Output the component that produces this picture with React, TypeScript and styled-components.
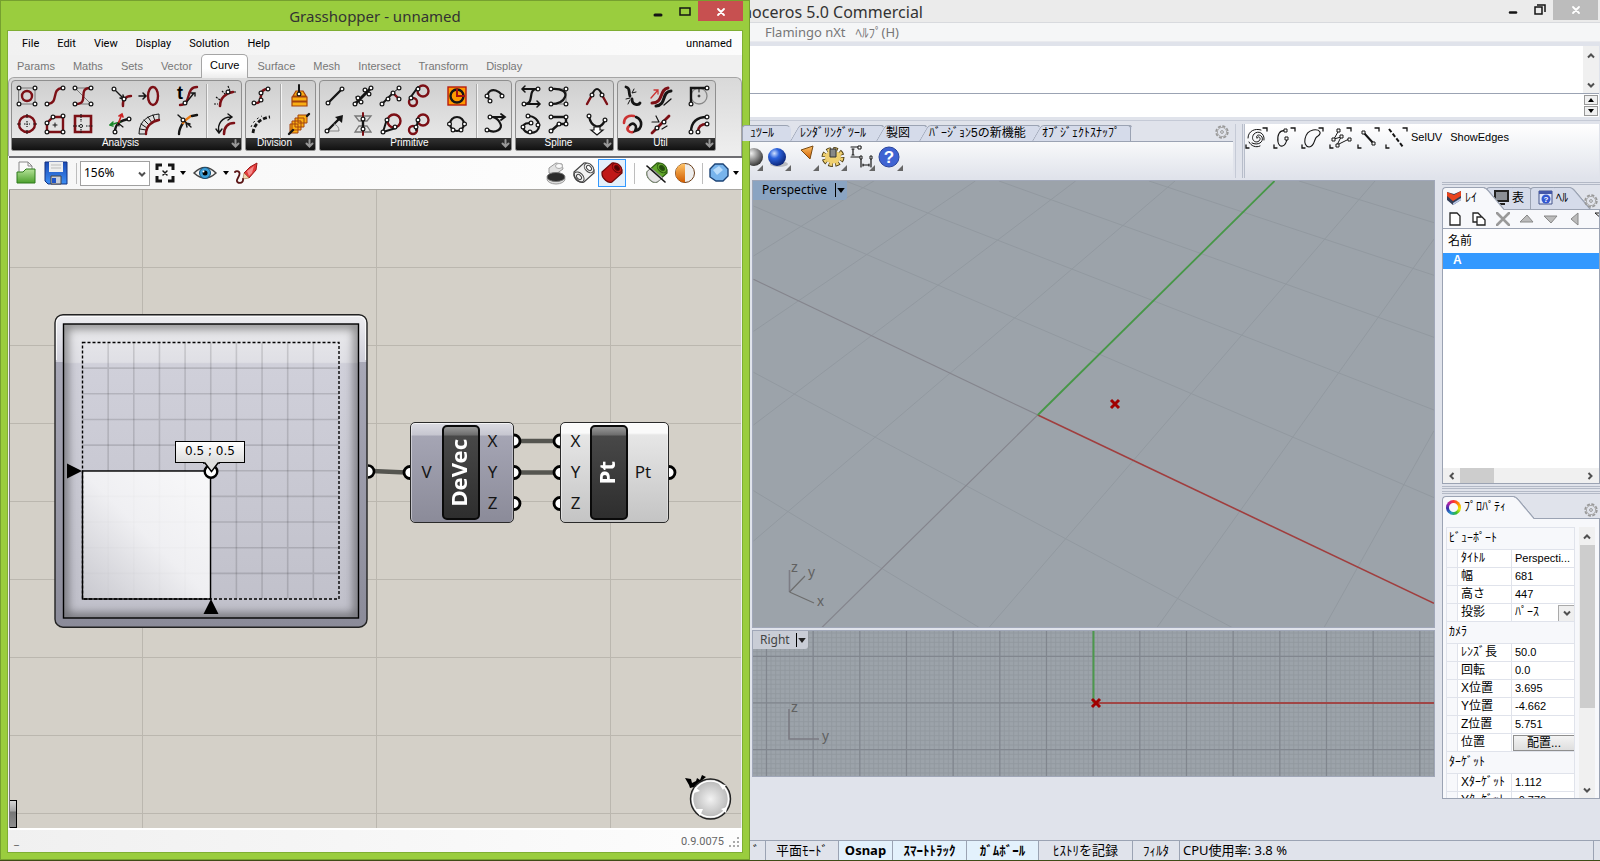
import React from 'react';
import styled, { createGlobalStyle, css } from 'styled-components';

const ui = `"Noto Sans", "Noto Sans CJK JP", sans-serif`;
const menuFont = `Roboto, "Noto Sans CJK JP", sans-serif`;
const gothic = `"Liberation Sans", "Noto Sans CJK JP", sans-serif`;

const K = '#151515';
const R = '#7c1016';

const Global = createGlobalStyle`
  *, *::before, *::after { box-sizing: border-box; }
  html, body { margin: 0; padding: 0; }
  body { background: #e0e3eb; font-family: ${ui}; font-size: 12px; color: #000; }
  button, select, input { font: inherit; color: inherit; border-radius: 0; }
  button { border: 0; padding: 0; background: none; }
  svg { display: block; flex: none; }
`;

const Desktop = styled.div`
  display: grid;
  grid-template-columns: 750px minmax(0, 1fr);
  min-height: 100vh;
  border-bottom: 1px solid #3f4c17;
`;

/* ---------- Grasshopper window ---------- */

const GhWindow = styled.section`
  display: flex;
  flex-direction: column;
  background: #9acd3e;
  border: 1px solid #76a02f;
  padding: 0 6px 6px;
`;

const GhTitleBar = styled.header`
  position: relative;
  display: flex;
  justify-content: center;
  align-items: center;
  height: 29px;
  font-size: 15px;
  line-height: 24px;
  color: #333;
`;

const WindowButtons = styled.div<{ $inset?: boolean }>`
  position: absolute;
  top: 0;
  right: ${(p) => (p.$inset ? 2 : 0)}px;
  display: flex;
`;

const WindowButton = styled.button<{ $close?: string }>`
  display: flex;
  align-items: center;
  justify-content: center;
  width: ${(p) => (p.$close ? 45 : 27)}px;
  height: 20px;
  background: ${(p) => p.$close || 'none'};
`;

const GhClient = styled.div`
  flex: 1;
  display: flex;
  flex-direction: column;
  border: 1px solid #7fae33;
  background: #f0f0f0;
`;

const MenuBar = styled.nav`
  display: flex;
  align-items: center;
  gap: 18px;
  height: 24px;
  padding: 1px 10px 0 14px;
  background: linear-gradient(90deg, #f1f1f1, #fcfcfc);
  font: 11px/16px ${menuFont};
`;

const DocName = styled.span`
  margin-left: auto;
`;

const TabRow = styled.div`
  display: flex;
  align-items: center;
  height: 22px;
  font: 11px/16px ${gothic};
`;

const RibbonTab = styled.button<{ $on?: boolean }>`
  height: 22px;
  padding: 0 9px;
  color: #777;
  ${(p) =>
    p.$on &&
    css`
      position: relative;
      z-index: 1;
      height: 24px;
      padding: 0 8px 4px;
      color: #000;
      background: linear-gradient(#fff 60%, #ececec);
      border: 1px solid #a5a5a5;
      border-bottom: 0;
      border-radius: 5px 5px 0 0;
    `}
`;

const Ribbon = styled.div`
  display: flex;
  gap: 3px;
  height: 79px;
  padding: 2px 2px 0;
  background: linear-gradient(#d9d9d9, #efefef);
  border: 1px solid #a5a5a5;
  border-bottom: 0;
  border-radius: 6px 6px 0 0;
`;

const Group = styled.section`
  display: flex;
  flex-direction: column;
  height: 71px;
  background: linear-gradient(#cfcfcf, #ececec);
  border: 1px solid #8f8f8f;
  border-radius: 4px 4px 2px 2px;
  overflow: hidden;
`;

const GroupBody = styled.div`
  display: flex;
  flex: 1;
  padding: 1px 2px 0 1px;
`;

const GroupSection = styled.div<{ $cols: number }>`
  display: grid;
  grid-template-columns: repeat(${(p) => p.$cols}, 28px);
  grid-template-rows: 28px 28px;
  grid-auto-flow: column;
  & + & {
    margin-left: 10px;
    position: relative;
  }
  & + &::before {
    content: '';
    position: absolute;
    left: -5px;
    top: 2px;
    bottom: 0;
    width: 1px;
    background: #a9a9a9;
    box-shadow: 1px 0 #f4f4f4;
  }
`;

const ToolCell = styled.button`
  display: flex;
  align-items: center;
  justify-content: center;
`;

const GroupFoot = styled.footer`
  position: relative;
  height: 12px;
  padding-right: 12px;
  background: linear-gradient(#333, #111);
  color: #fff;
  text-align: center;
  font: 10px/10px ${gothic};
  svg {
    position: absolute;
    right: 1px;
    top: 1px;
  }
`;

const CanvasBar = styled.div`
  display: flex;
  align-items: center;
  height: 34px;
  margin-left: 1px;
  padding: 0 3px 1px 4px;
  border-top: 2px solid #6e6e72;
  border-bottom: 1px solid #a9a7a2;
  background: linear-gradient(90deg, #f6f6f6, #fff);
`;

const BarButton = styled.button<{ $w?: number; $on?: boolean }>`
  display: flex;
  align-items: center;
  justify-content: center;
  width: ${(p) => p.$w || 28}px;
  height: 28px;
  border: 1px solid ${(p) => (p.$on ? '#3399ff' : 'transparent')};
  background: ${(p) => (p.$on ? '#e4f0fb' : 'none')};
`;

const BarSep = styled.i<{ $gap?: number }>`
  width: 1px;
  height: 21px;
  background: #bdbdbd;
  margin: 0 ${(p) => p.$gap || 4}px;
`;

const Spacer = styled.span`
  flex: 1;
`;

const SelectWrap = styled.div<{ $w?: number }>`
  position: relative;
  width: ${(p) => p.$w || 70}px;
  svg {
    position: absolute;
    right: 4px;
    top: 9px;
    pointer-events: none;
  }
`;

const Zoom = styled.select`
  appearance: none;
  width: 100%;
  height: 25px;
  padding: 0 3px;
  border: 1px solid #a0a0a0;
  background: #fff;
  font: 12px/20px ${ui};
  display: block;
`;

const Canvas = styled.main`
  position: relative;
  flex: 1;
  min-height: 500px;
  margin: 0 1px;
  border-left: 1px solid #77757a;
  overflow: hidden;
  background-color: #d4d0c8;
  background-image: repeating-linear-gradient(90deg, transparent 0 132px, #bbb7af 132px 133px, transparent 133px 234px),
    repeating-linear-gradient(transparent 0 77px, #bbb7af 77px 78px);
`;

const Wires = styled.svg`
  position: absolute;
  left: 0;
  top: 0;
`;

const SliderNode = styled.div`
  position: absolute;
  left: 44px;
  top: 124px;
`;

const Tip = styled.output`
  position: absolute;
  left: 121px;
  top: 127px;
  width: 70px;
  height: 22px;
  border: 1px solid #000;
  background: linear-gradient(#fff, #dcdcdc);
  font: 12px/18px "DejaVu Sans", sans-serif;
  text-align: center;
`;

const TipTail = styled.svg`
  position: absolute;
  left: 149px;
  top: 148px;
`;

const Node = styled.div<{ $x: number; $w: number; $light?: boolean }>`
  position: absolute;
  left: ${(p) => p.$x}px;
  top: 232px;
  display: flex;
  width: ${(p) => p.$w}px;
  height: 101px;
  padding: 2px 0;
  border: 1px solid #2a2a2a;
  border-radius: 5px;
  box-shadow: inset 0 1px #ffffffb0, inset 1px 0 #ffffff70, inset -1px 0 #ffffff50;
  background: ${(p) =>
    p.$light
      ? 'linear-gradient(#fafafa 0 10px, #e6e6e6 12px, #c4c4c4)'
      : 'linear-gradient(#dcdce3 0, #c6c6d0 12px, #a5a5b4 13px, #8b8b99)'};
`;

const Ports = styled.div<{ $w: number }>`
  display: flex;
  flex-direction: column;
  justify-content: space-around;
  align-items: center;
  width: ${(p) => p.$w}px;
  padding: 0 0 2px;
  font: 17px/30px ${ui};
  color: #151515;
`;

const Capsule = styled.div`
  display: flex;
  align-items: center;
  justify-content: center;
  width: 38px;
  padding-right: 6px;
  border: 2px solid #0a0a0a;
  border-radius: 5px;
  background: linear-gradient(#989898, #6d6d6d 8px, #484848 9px, #2e2e2e);
  color: #fff;
  font: bold 22px/26px ${ui};
  span {
    writing-mode: vertical-rl;
    transform: rotate(180deg);
  }
`;

const Compass = styled.svg`
  position: absolute;
  right: 9px;
  bottom: 7px;
`;

const DockedSlider = styled.div`
  position: absolute;
  left: -1px;
  bottom: 0;
  width: 8px;
  height: 28px;
  border: 1px solid #000;
  border-left: 0;
  background: linear-gradient(#d5d5d5, #a5a5a5 10px, #777 11px, #8d8d8d);
`;

const GhStatus = styled.footer`
  display: flex;
  justify-content: space-between;
  align-items: center;
  height: 24px;
  padding: 2px 2px 0 6px;
  border-top: 2px solid #fff;
  background: linear-gradient(90deg, #f0f0f0, #fdfdfd);
  font: 11px/16px ${menuFont};
  color: #666;
  div {
    display: flex;
    align-items: center;
    gap: 4px;
  }
`;

/* ---------- Rhino window ---------- */

const Rhino = styled.section`
  display: flex;
  flex-direction: column;
  min-width: 0;
  background: #e0e3eb;
`;

const RhTitle = styled.header`
  position: relative;
  display: flex;
  height: 23px;
  background: #ebebeb;
  border-bottom: 1px solid #d8dade;
  font: 16px/24px ${ui};
  color: #333;
`;

const RhinoTitleText = styled.span`
  width: 173px;
  display: flex;
  justify-content: flex-end;
  overflow: hidden;
  white-space: nowrap;
`;

const RhMenu = styled.nav`
  display: flex;
  gap: 10px;
  height: 19px;
  padding-left: 15px;
  background: #f5f6f7;
  border-bottom: 1px solid #e9eaee;
  font-size: 13px;
  line-height: 18px;
  color: #777;
`;

const Commands = styled.div`
  margin: 4px 1px 0 0;
  background: #fff;
`;

const History = styled.div`
  display: flex;
  justify-content: flex-end;
  height: 48px;
  border-bottom: 1px solid #9ba3b3;
`;

const ScrollCol = styled.div`
  display: flex;
  flex-direction: column;
  align-items: center;
  justify-content: space-between;
  width: 16px;
  padding: 6px 0 4px;
  background: #f0f0f0;
`;

const CommandLine = styled.div`
  display: flex;
  height: 23px;
  padding-right: 1px;
`;

const CommandInput = styled.input`
  flex: 1;
  min-width: 0;
  border: 0;
  outline: 0;
  padding: 0 6px;
  background: transparent;
`;

const Spin = styled.div`
  display: grid;
  gap: 1px;
  padding: 1px 0;
  button {
    display: grid;
    place-items: center;
    width: 14px;
    height: 10px;
    border: 1px solid #999;
    background: #f0f0f0;
  }
`;

const ToolRows = styled.div`
  display: flex;
  height: 59px;
  margin-top: 3px;
  border-top: 1px solid #c5cad6;
  padding-top: 3px;
`;

const ToolDock = styled.div`
  flex: 1;
  min-width: 0;
  display: flex;
  flex-direction: column;
  margin-bottom: 1px;
  border-right: 1px solid #c5cad6;
  padding-right: 2px;
`;

const DockTabs = styled.div`
  display: flex;
  align-items: flex-end;
  height: 18px;
  border-bottom: 1px solid #9ba3b3;
  font: 12px/15px ${gothic};
`;

const DockTab = styled.button<{ $w: number; $first?: boolean; $last?: boolean }>`
  position: relative;
  z-index: 0;
  width: ${(p) => p.$w}px;
  height: 16px;
  padding: 1px 0 0 ${(p) => (p.$first ? 0 : 14)}px;
  text-align: left;
  white-space: nowrap;
  &::before {
    content: '';
    position: absolute;
    z-index: -1;
    inset: 0 ${(p) => (p.$last ? 6 : -5)}px 0 ${(p) => (p.$first ? -8 : 4)}px;
    background: #d5dbea;
    border: 1px solid #9ba3b3;
    border-bottom: 0;
    border-right-color: transparent;
    border-radius: 3px 5px 0 0;
    transform: ${(p) => (p.$first ? 'none' : 'skewX(-30deg)')};
    transform-origin: bottom;
  }
  ${(p) =>
    p.$last &&
    css`
      &::after {
        content: '';
        position: absolute;
        z-index: -1;
        inset: 0 0 0 auto;
        width: 20px;
        background: #d5dbea;
        border: solid #9ba3b3;
        border-width: 1px 1px 0 0;
        border-radius: 0 3px 0 0;
      }
    `}
`;

const GearSlot = styled.button`
  margin: 0 4px 2px auto;
`;

const DockTools = styled.div`
  display: flex;
  flex: 1;
  background: linear-gradient(#f8f9fa, #e0e3eb);
  padding-top: 1px;
`;

const DockTool = styled.button<{ $w?: number }>`
  position: relative;
  display: flex;
  align-items: center;
  justify-content: center;
  width: ${(p) => p.$w || 28}px;
  height: 28px;
  overflow: hidden;
  &::after {
    content: '';
    position: absolute;
    right: 0;
    bottom: 0;
    border: 3px solid;
    border-color: transparent #666 #666 transparent;
  }
`;

const SideTools = styled.div`
  display: flex;
  align-items: flex-start;
  width: 357px;
  margin: 0 1px 1px 6px;
  border-left: 1px solid #b7bdca;
  box-shadow: inset 1px 0 #e0e3eb, inset 2px 0 #b7bdca;
  background: linear-gradient(#fff, #e0e3eb);
  font: 11px/16px ${gothic};
`;

const SideTool = styled.button`
  width: 28px;
  height: 28px;
  display: grid;
  place-items: center;
`;

const TextTool = styled.button`
  margin-right: 8px;
  padding-top: 5px;
`;

const Work = styled.div`
  flex: 1;
  display: flex;
  padding: 1px 0 41px;
`;

const Views = styled.div`
  flex: 1;
  min-width: 0;
  display: flex;
  flex-direction: column;
  gap: 2px;
  padding: 0 7px 22px 2px;
`;

const View = styled.div<{ $grow: number }>`
  position: relative;
  flex: ${(p) => p.$grow} 0 0;
  min-height: ${(p) => p.$grow / 2}px;
  border: 1px solid #a0a7b8;
  background: #9ca3aa;
  overflow: hidden;
  > svg {
    position: absolute;
    inset: 0;
    width: 100%;
    height: 100%;
  }
`;

const ViewLabel = styled.button<{ $on?: boolean }>`
  position: absolute;
  left: 0;
  top: 0;
  display: flex;
  align-items: center;
  gap: ${(p) => (p.$on ? 8 : 6)}px;
  height: ${(p) => (p.$on ? 19 : 18)}px;
  padding: 0 2px ${(p) => (p.$on ? 2 : 0)}px ${(p) => (p.$on ? 9 : 7)}px;
  border-radius: 0 0 3px 0;
  background: ${(p) => (p.$on ? '#8aa4c2' : '#c9cdd6')};
  color: ${(p) => (p.$on ? '#000' : '#444')};
  font-size: 12px;
  line-height: 17px;
  span {
    display: block;
    height: 14px;
    padding: 5px 0 0 1px;
    border-left: 1px solid #000;
  }
`;

const Side = styled.aside`
  width: 158px;
  display: flex;
  flex-direction: column;
`;

const DoubleRule = styled.i`
  flex: none;
  height: 3px;
  margin-top: 2px;
  border: solid #b3b9c6;
  border-width: 1px 0;
`;

const Panel = styled.div<{ $h: number }>`
  flex: ${(p) => p.$h} 0 0;
  min-height: 0;
  display: flex;
  flex-direction: column;
  border: 1px solid #9ba3b3;
  border-top: 0;
  background: #fff;
  overflow: hidden;
`;

const PanelTabs = styled.div`
  position: relative;
  display: flex;
  flex: none;
  height: 23px;
  margin-top: 2px;
  border-bottom: 1px solid #9ba3b3;
  font: 12px/18px ${gothic};
`;

const PanelTab = styled.button<{ $w: number; $on?: boolean }>`
  position: relative;
  z-index: ${(p) => (p.$on ? 1 : 0)};
  display: flex;
  align-items: center;
  gap: 3px;
  width: ${(p) => p.$w}px;
  height: ${(p) => (p.$on ? 'calc(100% + 1px)' : '100%')};
  padding: 0 0 1px ${(p) => (p.$on ? 4 : 8)}px;
  white-space: nowrap;
  &::before {
    content: '';
    position: absolute;
    z-index: -1;
    inset: 0 0 0 0;
    border: 1px solid #9ba3b3;
    border-bottom: 0;
    border-right: 0;
    border-radius: 4px 3px 0 0;
    background: ${(p) => (p.$on ? '#f7f8fb' : '#d5dbea')};
  }
  &::after {
    content: '';
    position: absolute;
    z-index: -1;
    top: 0;
    bottom: 0;
    right: -10px;
    width: 20px;
    border-top: 1px solid #9ba3b3;
    border-right: 2px solid #9ba3b3;
    border-top-right-radius: 4px;
    background: ${(p) => (p.$on ? '#f7f8fb' : '#d5dbea')};
    transform: skewX(40deg);
  }
`;

const PanelGear = styled.button`
  position: absolute;
  right: 2px;
  bottom: 1px;
`;

const LayerTools = styled.div`
  display: flex;
  flex: none;
  align-items: center;
  height: 19px;
  border-bottom: 1px solid #9ba3b3;
  background: #f7f8fb;
  overflow: hidden;
  button {
    flex: none;
    display: grid;
    place-items: center;
    width: 24px;
  }
`;

const LayerTable = styled.table`
  border-collapse: collapse;
  width: 100%;
  font: 12px/15px ${gothic};
  th {
    height: 24px;
    padding: 0 5px;
    text-align: left;
    font-weight: normal;
    background: #fcfcfd;
  }
  td {
    height: 16px;
    padding: 0 10px;
    background: #3399ff;
    border-bottom: 1px dotted #fff;
    color: #fff;
    font-weight: bold;
  }
`;

const HScroll = styled.div`
  display: flex;
  align-items: center;
  flex: none;
  height: 15px;
  margin-top: auto;
  padding: 0 5px;
  background: #f0f0f0;
  i {
    width: 34px;
    height: 15px;
    margin: 0 auto 0 4px;
    background: #cdcdcd;
  }
`;

const Props = styled.div`
  display: flex;
  height: 100%;
  min-height: 0;
  padding: 8px 4px 0 3px;
  background: #f7f8fb;
`;

const PropTable = styled.table`
  align-self: flex-start;
  width: 129px;
  border-collapse: collapse;
  table-layout: fixed;
  font: 12px/15px ${gothic};
  th,
  td {
    height: 18px;
    padding: 0 0 0 3px;
    border: 1px solid #e0e3eb;
    text-align: left;
    font-weight: normal;
    white-space: nowrap;
    overflow: hidden;
    background: #fff;
  }
  th[scope='colgroup'] {
    height: 22px;
    padding-left: 2px;
    background: #f7f8fb;
  }
  td:first-child {
    background: #f7f8fb;
  }
  td:last-child {
    font-size: 11px;
  }
  col:nth-child(1) { width: 11px; }
  col:nth-child(2) { width: 54px; }
`;

const Projection = styled.select`
  appearance: none;
  display: block;
  width: 100%;
  height: 16px;
  padding: 0;
  border: 0;
  background: transparent;
  font-size: 12px;
`;

const DropBox = styled.span`
  position: absolute;
  right: 0;
  top: 0;
  display: grid;
  place-items: center;
  width: 17px;
  height: 17px;
  border: 1px solid #aaa;
  background: #efefef;
  pointer-events: none;
  svg { position: static; }
`;

const PlaceButton = styled.button`
  display: block;
  width: 62px;
  height: 16px;
  margin-left: -2px;
  border: 1px solid #8f8f8f;
  background: linear-gradient(#f4f4f4, #dedede);
  font-size: 12px;
`;

const Thumb = styled.i`
  width: 15px;
  height: 163px;
  margin: 4px 0 auto;
  background: #cdcdcd;
`;

const RhStatus = styled.footer`
  display: flex;
  height: 20px;
  border-top: 1px solid #9ba3b3;
  font: 13px/18px ${ui};
`;

const StatusCell = styled.button<{ $w?: number; $on?: boolean; $left?: boolean }>`
  flex: ${(p) => (p.$w ? 'none' : '1')};
  width: ${(p) => (p.$w ? p.$w + 'px' : 'auto')};
  padding: 0 3px 1px;
  border-right: 1px solid #9ba3b3;
  text-align: ${(p) => (p.$left ? 'left' : 'center')};
  white-space: nowrap;
  overflow: hidden;
  background: ${(p) => (p.$on ? '#e3f1fc' : 'none')};
  font-weight: ${(p) => (p.$on ? 'bold' : 'normal')};
`;

const StatusEnd = styled.i`
  width: 6px;
`;

const ColorRing = styled.i`
  flex: none;
  width: 15px;
  height: 15px;
  border-radius: 50%;
  background: radial-gradient(#f7f8fb 4px, transparent 5px), conic-gradient(#f33, #f80, #ee0, #3b3, #29c, #33a, #a2a, #f33);
`;

/* ---------- Icons ---------- */

const N = ({ x, y }: { x: number; y: number }) => (
  <circle cx={x} cy={y} r="1.9" fill="#fff" stroke={K} strokeWidth="1.2" />
);
const P = ({ d, c = K, w = 2, dash }: { d: string; c?: string; w?: number; dash?: string }) => (
  <path d={d} fill="none" stroke={c} strokeWidth={w} strokeDasharray={dash} strokeLinecap={dash ? 'butt' : 'round'} />
);
const Ico = ({ children, s = 24 }: { children: React.ReactNode; s?: number }) => (
  <svg width={s} height={s} viewBox={`0 0 ${s} ${s}`} aria-hidden="true">
    {children}
  </svg>
);

const nodes = (...pts: number[][]) => pts.map(([x, y], i) => <N key={i} x={x} y={y} />);

type Tool = [string, React.ReactNode];

const analysis: Tool[][] = [
  [
    ['Bounds', <><P w={1} c="#777" d="M4 4H20V20H4Z" /><circle cx="12" cy="12" r="5" fill="none" stroke={R} strokeWidth="2.4" />{nodes([4, 4], [20, 4], [4, 20], [20, 20])}</>],
    ['Centre', <><circle cx="12" cy="12" r="8" fill="none" stroke={R} strokeWidth="2.4" /><P w={1.2} dash="1.5 1" d="M2 12H6M18 12H22M12 2V6M12 18V22M9 12H15M12 9V15" /></>],
    ['End points', <><P c={R} d="M5 20C16 19 8 5 19 4" w={2.4} />{nodes([4, 20], [20, 4])}</>],
    ['Polygon', <><P c={R} w={2.4} d="M4 20V11L10 5H20V20Z" /><P w={1} d="M10 13H14M12 11V15" />{nodes([4, 11], [10, 5], [20, 4], [4, 20], [20, 20])}</>],
    ['Control polygon', <><P w={1} c="#777" d="M4 4H20M4 4L20 20M4 20H20" /><P c={R} d="M5 20C19 20 6 4 19 4" w={2.4} />{nodes([4, 4], [20, 4], [4, 20], [20, 20])}</>],
    ['Rectangle', <><P c={R} w={2.6} d="M4 4H20V20H4Z" /><P w={1.2} dash="1.5 1" d="M2 14H9M15 14H22M10 2V10M10 17V22" /><circle cx="10" cy="14" r="1.5" fill="#fff" stroke={K} /></>],
  ],
  [
    ['Closest point', <><P w={1.4} d="M5 5L15 15M11 14L15 15L14 11" /><P c={R} w={2.4} d="M14 22C13 16 17 12 22 12" />{nodes([5, 5], [15, 15])}</>],
    ['Frame', <><P w={2.4} d="M6 20C6 11 12 8 21 7" /><P w={1.6} c="#1a8a2a" d="M11 10L1 13M4 10L1 13L4 14" /><P w={1.6} c="#c22" d="M9 12L13 2M10 4L13 2L14 5" /><P w={1.2} d="M9 11L14 15M10 14L9 11" />{nodes([6, 20], [20, 7])}</>],
    ['Closed', <><P w={1.5} d="M2 12H8M6 9L9 12L6 15" /><ellipse cx="16" cy="12" rx="5" ry="9" fill="none" stroke={R} strokeWidth="2.4" /></>],
    ['Curvature graph', <><path d="M2 22C2 8 12 3 22 2V8C15 9 9 14 9 22Z" fill="#ddd" stroke={K} /><P w={1} d="M3 17L9 18M4 12L10 16M7 8L12 13M11 5L15 11M16 3L18 9" /><P c={R} w={2.4} d="M9 22C9 14 15 9 22 8" /></>],
  ],
  [
    ['Parameter', <><P c={R} w={2.4} d="M5 21C17 21 10 3 22 3" /><P w={1.4} d="M10 20L19 9M16 9H20V12" /><text x="2" y="15" fontSize="18" fontWeight="bold" fontFamily="Liberation Sans">t</text>{nodes([10, 19])}</>],
    ['Curvature', <><P w={2.4} d="M4 22C4 17 6 14 8 11" /><P c="#e87a14" w={2.4} d="M8 11C11 7 13 6 16 4" /><P w={2.4} d="M17 4L22 3" /><P w={1.4} d="M3 3L16 15M12 15L11 11L15 12" />{nodes([8, 8])}</>],
  ],
  [
    ['Divide', <><P c={R} w={2.6} d="M7 22C7 14 13 9 20 8" /><P w={1.2} dash="2 1" d="M1 20H5M3 13L7 16M9 7L12 10M15 2L17 7M21 8L23 8" />{nodes([15, 8])}</>],
    ['Length', <><P c={R} w={2.6} d="M11 22C11 15 15 11 21 11" /><P w={1.4} d="M6 20C4 12 9 5 18 5M3 17L6 21L9 17M15 2L19 5L15 8" /></>],
  ],
];

const division: Tool[][] = [
  [
    ['Divide curve', <><P c={R} w={2.4} d="M5 19C12 20 11 15 12 12C12 7 14 5 19 5" />{nodes([5, 19], [12, 16], [12, 9], [19, 5])}</>],
    ['Dash pattern', <><P w={2.8} dash="4 2" d="M4 21C5 12 12 6 21 5" /><P w={1} dash="2 3" d="M2 15C4 10 8 6 13 4" /></>],
  ],
  [
    ['Contour', <><path d="M5 22H20V18H5ZM5 17H20V13H5ZM6 12H19L16 7H9Z" fill="#f9ae14" stroke="#a3420c" strokeWidth="1.2" /><P d="M12 1V9" />{nodes([12, 10])}</>],
    ['Perp frames', <><path d="M11 3H20V11H11ZM8 6H17V15H8ZM5 9H14V18H5ZM3 12H11V21H3Z" fill="#f9ae14" stroke="#a3420c" /><P w={2.4} d="M2 22L6 18M20 4L22 2" /></>],
  ],
];

const primitive: Tool[][] = [
  [
    ['Line', <><P d="M5 19L19 5" w={2.4} />{nodes([5, 19], [19, 5])}</>],
    ['Line SDL', <><P d="M4 19L17 6" w={2.4} /><path d="M20 3L19 11L12 5Z" fill={K} /><P w={1} c="#888" d="M5 19H16C16 15 14 13 11 12" />{nodes([4, 19])}</>],
    ['Line 4pt', <><P d="M4 20L20 4" w={3} /><P w={1.2} d="M5 13L11 19M13 5L19 11" />{nodes([4, 20], [7, 14], [10, 18], [14, 6], [18, 10], [20, 4])}</>],
    ['Line 2 planes', <><P d="M4 4H20L16 9H8ZM4 20H20L16 14H8Z" w={1.3} c="#777" /><P c={R} d="M12 1V5M12 19V23" /><P w={2.4} d="M12 7V17" />{nodes([12, 7], [12, 17])}</>],
    ['Fit line', <><P d="M3 20L14 9" w={2} /><P d="M14 9L19 14" c={R} w={2.4} /><P w={1} d="M14 9L20 4" />{nodes([3, 20], [9, 15], [14, 9], [20, 4], [20, 15])}</>],
    ['Tangent line', <><circle cx="15" cy="9" r="6.5" fill="none" stroke={R} strokeWidth="2.4" /><P w={2} d="M4 20L8 7M4 20L17 16" />{nodes([4, 20], [8, 8], [16, 15])}</>],
    ['Tangent out', <><circle cx="16" cy="7" r="5.5" fill="none" stroke={R} strokeWidth="2.4" /><circle cx="6" cy="18" r="4" fill="none" stroke={R} strokeWidth="2.4" /><P d="M3 14L11 3" />{nodes([4, 14], [11, 5])}</>],
    ['Tangent in', <><circle cx="16" cy="8" r="5.5" fill="none" stroke={R} strokeWidth="2.4" /><circle cx="6" cy="18" r="4" fill="none" stroke={R} strokeWidth="2.4" /><P d="M9 18L11 8" />{nodes([9, 15], [11, 8])}</>],
  ],
  [
    ['Circle', <><rect x="3" y="3" width="18" height="18" fill="#f90" stroke="#b81c0c" strokeWidth="1.4" /><circle cx="12" cy="12" r="6.5" fill="none" stroke={K} strokeWidth="2.4" /><P c="#a61010" d="M12 5V12H19" /></>],
    ['Circle 3pt', <><circle cx="12" cy="12" r="7" fill="none" stroke={K} strokeWidth="2.2" />{nodes([4.5, 12], [19.5, 12], [8, 18], [16, 18])}</>],
  ],
  [
    ['Arc', <><P w={2.2} d="M7 17C0 8 11 1 19 11" />{nodes([7, 17], [19, 12], [4, 12])}</>],
    ['Arc SED', <><P w={2.2} d="M5 18C12 22 21 17 17 11C16 8 12 5 9 5" /><P w={1.8} d="M6 5H21M18 2L22 5L18 8" />{nodes([4, 18], [7, 5])}</>],
  ],
];

const spline: Tool[][] = [
  [
    ['Bezier', <><P w={2.2} d="M5 20H20M19 5H4M18 5C8 5 16 20 6 20" /><P w={1.5} d="M6 2L3 5L6 8M18 17L21 20L18 23" />{nodes([19, 5], [5, 20])}</>],
    ['Interpolate', <><P w={2.2} d="M4 15C4 23 20 23 20 14C20 8 15 4 9 4M4 15C5 11 8 11 12 11" />{nodes([9, 4], [4, 15], [12, 11], [19, 13], [11, 20])}</>],
    ['Nurbs', <><P w={1} c="#777" d="M4 5H19V20H4" /><P w={2.2} d="M4 5C15 4 20 8 18 13C16 18 10 20 4 20" />{nodes([4, 5], [19, 5], [19, 20], [4, 20])}</>],
    ['Polyline', <><P w={2.4} d="M4 5H19V12H12L4 19" />{nodes([4, 5], [19, 5], [19, 12], [12, 12], [4, 19])}</>],
  ],
  [
    ['Tangent curve', <><P c={R} w={2.4} d="M2 20L7 11M17 11L22 20" /><P w={2.2} d="M7 11C10 3 14 3 17 11" />{nodes([7, 11], [17, 11])}</>],
    ['Catenary', <><P w={2.2} d="M4 4C6 16 16 18 20 8" /><path d="M9 15H15V18H18L12 23L6 18H9Z" fill="#fff" stroke={K} strokeWidth="1.2" />{nodes([4, 4], [20, 8])}</>],
  ],
];

const util: Tool[][] = [
  [
    ['Explode', <><P w={2.8} d="M5 3C10 4 7 8 9 12M11 15C11 22 18 21 19 19" /><P w={1} d="M13 5L11 9L15 8M5 15L9 14M7 20L9 16" /></>],
    ['Extend', <><P c="#c33" w={2.6} d="M3 11C3 5 8 3 13 4M12 20C9 21 4 18 8 14" /><P w={2.6} d="M9 13C12 10 17 13 14 19C22 17 22 8 15 5" /></>],
    ['Offset', <><P c={R} w={3} d="M3 19C15 19 10 5 19 4" /><P c={K} w={3} d="M7 22C18 21 12 8 22 7" /><P c="#c33" w={1.3} d="M2 14L9 6M5 6H9V10" /><P w={1.3} d="M22 15L15 21" /></>],
    ['Split', <><P c={R} w={2.8} d="M3 21L20 4" /><P w={1.2} d="M3 10L9 10M7 4L10 10M13 17L18 14" />{nodes([8, 16], [15, 10])}</>],
  ],
  [
    ['Fillet', <><circle cx="12" cy="12" r="8" fill="none" stroke="#888" strokeWidth="1.3" /><P w={2.4} d="M4 20V4H20" /><P w={1} d="M12 11V13M11 12H13M12 8V4" />{nodes([4, 20], [20, 4])}</>],
    ['Offset loose', <><P w={2.4} d="M4 20C4 10 10 5 20 5" /><P c={R} w={2.4} d="M11 20C11 15 14 12 20 12" />{nodes([4, 20], [20, 5], [11, 20], [20, 12])}</>],
  ],
];

const groups: [string, Tool[][]][] = [
  ['Analysis', analysis],
  ['Division', division],
  ['Primitive', primitive],
  ['Spline', spline],
  ['Util', util],
];

const Arrow = ({ w = 6, c = '#000', up = false }: { w?: number; c?: string; up?: boolean }) => (
  <svg width={w} height={w / 2 + 1} viewBox="0 0 6 4" aria-hidden="true">
    <path d={up ? 'M0 4H6L3 0Z' : 'M0 0H6L3 4Z'} fill={c} />
  </svg>
);

const Chevron = ({ turn = 0 }: { turn?: number }) => (
  <svg width="8" height="8" viewBox="0 0 8 8" aria-hidden="true">
    <path d="M1 2.5L4 5.5L7 2.5" fill="none" stroke="#505050" strokeWidth="2" transform={`rotate(${turn} 4 4)`} />
  </svg>
);

const Gear = () => (
  <Ico s={14}>
    <circle cx="7" cy="7" r="5.8" fill="none" stroke="#999" strokeWidth="1.8" strokeDasharray="3 1.5" />
    <circle cx="7" cy="7" r="4.6" fill="none" stroke="#aaa" />
    <circle cx="7" cy="7" r="1.4" fill="none" stroke="#999" />
  </Ico>
);

const Cyl = ({ fill, line, dark, half, wire }: { fill: string; line: string; dark: string; half?: boolean; wire?: boolean }) => (
  <Ico>
    <path d="M2 11L12 2C15 1 21 5 22 9V12L12 21C8 23 2 17 2 13Z" fill={fill} stroke={line} strokeWidth="1.2" />
    {half && <path d="M2 11L6 7L18 17L12 21C8 23 2 17 2 13Z" fill="#e4e4e4" stroke="#888" />}
    <ellipse cx="17" cy="7" rx="5.5" ry="3.8" transform="rotate(45 17 7)" fill={fill} stroke={line} />
    <ellipse cx="17" cy="7" rx="3" ry="2" transform="rotate(45 17 7)" fill={dark} stroke={line} />
    {wire && (
      <>
        <ellipse cx="7" cy="16" rx="6" ry="4" transform="rotate(45 7 16)" fill="none" stroke={line} />
        <ellipse cx="7" cy="16" rx="3" ry="2" transform="rotate(45 7 16)" fill="none" stroke={line} />
      </>
    )}
    {half && <P d="M2 5L20 21" w={1.6} />}
  </Ico>
);

const Glyphs = () => (
  <defs>
    <radialGradient id="blueBall" cx=".35" cy=".3" r=".8">
      <stop offset="0" stopColor="#cfe0ff" />
      <stop offset=".35" stopColor="#2b62dc" />
      <stop offset="1" stopColor="#061a66" />
    </radialGradient>
    <radialGradient id="greyBall" cx=".35" cy=".3" r=".8">
      <stop offset="0" stopColor="#eee" />
      <stop offset="1" stopColor="#222" />
    </radialGradient>
    <linearGradient id="orange" x2="0" y2="1">
      <stop offset="0" stopColor="#ffc468" />
      <stop offset="1" stopColor="#d05c00" />
    </linearGradient>
    <linearGradient id="folder" x2="0" y2="1">
      <stop offset="0" stopColor="#b6e39a" />
      <stop offset="1" stopColor="#4da02c" />
    </linearGradient>
    <linearGradient id="disk" x2="0" y2="1">
      <stop offset="0" stopColor="#1b49b4" />
      <stop offset="1" stopColor="#3d8ff5" />
    </linearGradient>
    <linearGradient id="frame" x2="0" y2="1">
      <stop offset="0" stopColor="#eeeef1" />
      <stop offset=".15" stopColor="#cfcfda" />
      <stop offset=".152" stopColor="#a8a8b7" />
      <stop offset="1" stopColor="#8b8b99" />
    </linearGradient>
    <linearGradient id="well" x2="0" y2="1">
      <stop offset="0" stopColor="#eaeaec" />
      <stop offset=".13" stopColor="#dfdfe5" />
      <stop offset=".135" stopColor="#d0d0da" />
      <stop offset="1" stopColor="#c0c0ca" />
    </linearGradient>
    <linearGradient id="fill" x1="1" y1="0" x2="0" y2="1">
      <stop offset="0" stopColor="#fff" />
      <stop offset=".5" stopColor="#f5f5f7" />
      <stop offset="1" stopColor="#c9c9cf" />
    </linearGradient>
    <radialGradient id="pad">
      <stop offset="0" stopColor="#f2f2f2" />
      <stop offset="1" stopColor="#b4b4b4" />
    </radialGradient>
    <filter id="soft">
      <feGaussianBlur stdDeviation="5" />
    </filter>
    <clipPath id="wellClip">
      <rect x="9" y="10" width="295" height="294" />
    </clipPath>
  </defs>
);

const DefsHost = styled.svg`
  position: absolute;
`;

const tenths = [1, 2, 3, 4, 5, 6, 7, 8, 9];

const SliderDrawing = () => (
  <svg width="322" height="314" viewBox="0 0 322 314" role="img" aria-label="MD slider">
    <rect x="1" y="0.7" width="312" height="312.5" rx="8" fill="url(#frame)" stroke="#222" strokeWidth="1.4" />
    <path d="M2.500 46V9Q3 2.500 9 2.500H305Q311 2.500 311.500 9V46" fill="none" stroke="#fff" strokeOpacity=".8" />
    <rect x="9.5" y="10" width="295" height="294" fill="url(#well)" />
    <rect x="9.5" y="10" width="295" height="294" fill="none" stroke="#000" strokeOpacity=".45" strokeWidth="9" filter="url(#soft)" clipPath="url(#wellClip)" />
    <rect x="9.5" y="10" width="295" height="294" fill="none" stroke="#000" strokeWidth="1.4" />
    {tenths.map((i) => (
      <path key={i} d={`M${28.5 + i * 25.65} 28.5V285M28.5 ${28.5 + i * 25.65}H285`} stroke="#000" strokeOpacity=".13" strokeWidth="1.6" />
    ))}
    <rect x="28.5" y="157" width="128" height="128" fill="url(#fill)" fillOpacity=".88" stroke="#000" strokeWidth="1.4" />
    <rect x="28.5" y="28.5" width="256.5" height="256.5" fill="none" stroke="#000" strokeWidth="1.4" strokeDasharray="3 2" />
    <path d="M13 149.5V164.5L28 157ZM149.5 300H164.5L157 285Z" fill="#000" />
    <circle cx="157" cy="157.5" r="6.3" fill="#fff" stroke="#000" strokeWidth="2.4" />
    <path d="M314 151.500A6 6 0 0 1 314 163.500" fill="#fff" stroke="#000" strokeWidth="2.6" />
  </svg>
);

const portL = (x: number, y: number) => `M${x} ${y - 6}A6 6 0 0 0 ${x} ${y + 6}`;
const portR = (x: number, y: number) => `M${x} ${y - 6}A6 6 0 0 1 ${x} ${y + 6}`;

const viewLines =
  'M3.5 26L684 317.6M93 0L684 230M249 1L684 157.3M399 1L684 95.3M549 1L684 42.7M3.5 192.3L483 448M3.5 310.7L230 448' +
  'M625 1L238.5 448M684 59L406.6 448M684 250.7L573.8 448M425 1L3.5 361M325.6 1L3.5 245M225.3 1L3.5 151.3M125.4 0L3.5 76';

const rep = (n: number) => Array.from({ length: n }, (_, i) => i);

const commandIcons: Tool[] = [
  ['Spiral', <P key="a" w={1} d="M12 12C13 9 17 12 14 15C10 18 5 13 9 8C13 4 20 7 19 14M12 12C10 10 14 7 17 11C19 16 13 20 7 17M3 12C3 5 10 2 16 4M4 16C6 20 11 22 15 20" />],
  ['Open curve', <g key="b"><P w={1.1} d="M13 5C6 3 4 10 5 16C6 22 13 22 14 12" /><path d="M11 3H14V6H11ZM12 11H15V14H12Z" fill="#fff" stroke={K} /></g>],
  ['Closed curve', <P key="c" w={1.1} d="M12 4C19 3 21 7 17 10C12 12 15 20 8 21C1 20 3 6 12 4Z" />],
  ['Points', <g key="d"><P w={1} d="M10 4L5 13L12 11L8 19L20 13" /><path d="M8 3H11V6H8ZM3 12H6V15H3ZM11 9H14V12H11ZM7 18H10V21H7ZM19 12H22V15H19Z" fill="#fff" stroke={K} /></g>],
  ['Line', <g key="e"><P w={2} d="M7 7L17 18" /><path d="M5 5H8V8H5ZM15 16H18V19H15Z" fill="#fff" stroke={K} /></g>],
  ['Dashed line', <P key="f" w={2} dash="4 2" d="M4 3L18 21" />],
];

const props: [string, [string, string][]][] = [
  ['ﾋﾞｭｰﾎﾟｰﾄ', [['ﾀｲﾄﾙ', 'Perspecti...'], ['幅', '681'], ['高さ', '447'], ['投影', 'ﾊﾟｰｽ']]],
  ['ｶﾒﾗ', [['ﾚﾝｽﾞ長', '50.0'], ['回転', '0.0'], ['X位置', '3.695'], ['Y位置', '-4.662'], ['Z位置', '5.751'], ['位置', '配置...']]],
  ['ﾀｰｹﾞｯﾄ', [['Xﾀｰｹﾞｯﾄ', '1.112'], ['Yﾀｰｹﾞｯﾄ', '-0.776']]],
];

const PropValue = ({ label, value }: { label: string; value: string }) => {
  if (label === '投影')
    return (
      <SelectWrap $w={60}>
        <Projection aria-label={label} defaultValue={value}>
          <option>{value}</option>
        </Projection>
        <DropBox><Chevron /></DropBox>
      </SelectWrap>
    );
  if (label === '位置') return <PlaceButton>{value}</PlaceButton>;
  return <>{value}</>;
};

const Grasshopper = () => (
  <GhWindow>
    <GhTitleBar>
      <span>Grasshopper - unnamed</span>
      <WindowButtons>
        <WindowButton aria-label="Minimize"><Ico s={12}><P d="M3 10H9" w={3} /></Ico></WindowButton>
        <WindowButton aria-label="Maximize"><Ico s={12}><path d="M1 3H11V10H1Z" fill="none" stroke={K} strokeWidth="1.5" /></Ico></WindowButton>
        <WindowButton aria-label="Close" $close="#c75050"><Ico s={12}><P c="#fff" w={1.8} d="M3 4L9 10M9 4L3 10" /></Ico></WindowButton>
      </WindowButtons>
    </GhTitleBar>
    <GhClient>
      <MenuBar>
        {['File', 'Edit', 'View', 'Display', 'Solution', 'Help'].map((m) => <button key={m}>{m}</button>)}
        <DocName>unnamed</DocName>
      </MenuBar>
      <TabRow>
        {['Params', 'Maths', 'Sets', 'Vector', 'Curve', 'Surface', 'Mesh', 'Intersect', 'Transform', 'Display'].map((t) => (
          <RibbonTab key={t} $on={t === 'Curve'}>{t}</RibbonTab>
        ))}
      </TabRow>
      <Ribbon>
        {groups.map(([name, sections]) => (
          <Group key={name}>
            <GroupBody>
              {sections.map((tools, i) => (
                <GroupSection key={i} $cols={tools.length / 2}>
                  {tools.map(([label, art]) => <ToolCell key={label} aria-label={label}><Ico>{art}</Ico></ToolCell>)}
                </GroupSection>
              ))}
            </GroupBody>
            <GroupFoot>{name}<Ico s={9}><P c="#999" w={2} d="M4.5 1V7M1.5 4.5L4.5 7.5L7.5 4.5" /></Ico></GroupFoot>
          </Group>
        ))}
      </Ribbon>
      <CanvasBar>
        <BarButton $w={26} aria-label="Open"><Ico>
          <path d="M5 1H14L18 5V14H5Z" fill="#fafafa" stroke="#888" /><path d="M14 1V5H18" fill="none" stroke="#888" />
          <path d="M3 22V11H9L12 8H21V22Z" fill="url(#folder)" stroke="#2f7a1c" /></Ico></BarButton>
        <BarButton $w={34} aria-label="Save"><Ico>
          <path d="M1 1H23V23H4L1 20Z" fill="url(#disk)" stroke="#12307e" /><path d="M5 1H19V11H5Z" fill="#eee" />
          <path d="M7 4H17M7 7H17" stroke="#bbb" /><path d="M7 15H17V23H7Z" fill="#c9ced8" stroke="#444" /><path d="M8 17H12V22H8Z" fill="#1f55c8" /></Ico></BarButton>
        <BarSep $gap={3} />
        <SelectWrap>
          <Zoom aria-label="Zoom" defaultValue="156%"><option>156%</option></Zoom>
          <Chevron />
        </SelectWrap>
        <BarButton $w={30} aria-label="Zoom extents"><Ico>
          <path d="M4 9V4H9M15 4H20V9M20 15V20H15M9 20H4V15" fill="none" stroke={K} strokeWidth="3" /><P w={1.5} d="M10 10L14 14M14 10L10 14" /></Ico></BarButton>
        <BarButton $w={6} aria-label="Zoom menu"><Arrow /></BarButton>
        <BarButton $w={38} aria-label="Preview"><Ico>
          <path d="M1 12Q12 1 23 12Q12 22 1 12Z" fill="#f4f4f4" stroke="#444" strokeWidth="1.5" /><circle cx="12" cy="12" r="5.5" fill="#3d9fd8" stroke="#134c74" /><circle cx="12" cy="12" r="2.5" /><circle cx="10.5" cy="10.5" r="1" fill="#fff" /></Ico></BarButton>
        <BarButton $w={3} aria-label="Preview menu"><Arrow /></BarButton>
        <BarButton $w={38} aria-label="Sketch"><Ico>
          <path d="M10 12L16 6L23 2L22 9L15 17Z" fill="#e33b3b" stroke="#9a1818" /><path d="M13 10L20 5L18 12L15 15Z" fill="#f58a8a" /><path d="M10 12L15 17L9 18Z" fill="#f3d6b0" stroke="#9a6a3a" strokeWidth=".6" /><P c="#5a1515" w={1.800} d="M9 18C10 23 2 23 3 19C4 16 7 13 5 11C4 10 2 10 1 11" /></Ico></BarButton>
        <Spacer />
        <BarButton aria-label="No preview"><Ico>
          <path d="M5 7L12 2L18 3L19 8L12 13L5 12Z" fill="#e2e2e2" stroke="#999" /><ellipse cx="15" cy="5" rx="3.5" ry="2.5" fill="#fafafa" stroke="#aaa" /><ellipse cx="12" cy="18" rx="9" ry="5" fill="#ddd" stroke="#999" /><ellipse cx="12" cy="16" rx="9" ry="4.5" fill="#2c2c2c" stroke="#777" /></Ico></BarButton>
        <BarButton aria-label="Wireframe preview"><Cyl fill="#f2f2f2" line="#444" dark="#fff" wire /></BarButton>
        <BarButton aria-label="Shaded preview" $on><Cyl fill="#c01818" line="#6d0808" dark="#4c0505" /></BarButton>
        <BarSep $gap={8} />
        <BarButton aria-label="Selected preview"><Cyl fill="#62a82c" line="#2c5a10" dark="#234a0c" half /></BarButton>
        <BarButton aria-label="Document preview"><Ico>
          <circle cx="12" cy="12" r="9.5" fill="#eee" stroke="#6b3c16" /><path d="M12 2.5A9.500 9.500 0 0 0 12 21.500Z" fill="url(#orange)" /></Ico></BarButton>
        <BarSep $gap={3} />
        <BarButton $w={26} aria-label="Mesh quality"><Ico>
          <path d="M8 3L16 3L21 8V15L16 20H9L3 16V8Z" fill="#78b4ec" stroke="#1d4477" strokeWidth="1.4" /><path d="M6 9L12 5L16 9L10 14Z" fill="#b9dcfb" /></Ico></BarButton>
        <BarButton $w={7} aria-label="Mesh menu"><Arrow /></BarButton>
      </CanvasBar>
      <Canvas>
        <Wires width="730" height="638" viewBox="10 190 730 638" aria-hidden="true">
          <path d="M372 471L406 472.5M518 441H556M518 472.5H556" stroke="#555550" strokeWidth="4.500" />
          <path d={portL(410, 472.5) + portR(514, 441) + portR(514, 472.5) + portR(514, 503.5) + portL(560, 441) + portL(560, 472.5) + portL(560, 503.5) + portR(669, 472.5)} fill="#fff" stroke="#000" strokeWidth="2.800" />
        </Wires>
        <SliderNode>
          <SliderDrawing />
          <Tip>0.5 ; 0.5</Tip>
          <TipTail width="17" height="11" viewBox="0 0 17 11"><path d="M1 0H16V1L8.5 9.5L1 1Z" fill="#dedede" /><path d="M0 1H2L8.5 9.5L15 1H17" fill="none" stroke="#000" strokeWidth="1.4" /></TipTail>
        </SliderNode>
        <Node $x={400} $w={104}>
          <Ports $w={31}><span>V</span></Ports>
          <Capsule><span>DeVec</span></Capsule>
          <Ports $w={25}><span>X</span><span>Y</span><span>Z</span></Ports>
        </Node>
        <Node $x={550} $w={109} $light>
          <Ports $w={29}><span>X</span><span>Y</span><span>Z</span></Ports>
          <Capsule><span>Pt</span></Capsule>
          <Ports $w={30}><span>Pt</span></Ports>
        </Node>
        <DockedSlider />
        <Compass width="50" height="46" viewBox="0 0 50 46" aria-hidden="true">
          <path d="M3 3L9 4L10 8L14 6L15 3L18 5L20 0L24 2L12 12L8 13L7 10Z" fill="#000" />
          <circle cx="28.5" cy="24" r="20" fill="url(#pad)" stroke="#222" strokeWidth="1.4" />
          <circle cx="28.5" cy="24" r="18" fill="none" stroke="#fff" strokeWidth="1.6" />
          <path d="M13 12L18 16L12 18ZM37 9L44 10L41 15ZM13 34L21 34L18 41ZM39 34L45 32L44 38Z" fill="#fff" />
        </Compass>
      </Canvas>
      <GhStatus>
        <span>_</span>
        <div>0.9.0075<Ico s={12}><path d="M9 1H11V3H9ZM5 5H7V7H5ZM9 5H11V7H9ZM1 9H3V11H1ZM5 9H7V11H5ZM9 9H11V11H9Z" fill="#aaa" /></Ico></div>
      </GhStatus>
    </GhClient>
  </GhWindow>
);

const RhinoWindow = () => (
  <Rhino>
    <RhTitle>
      <RhinoTitleText>noceros 5.0 Commercial</RhinoTitleText>
      <WindowButtons $inset>
        <WindowButton aria-label="Minimize"><Ico s={12}><P d="M3 8.500H9" w={2.5} /></Ico></WindowButton>
        <WindowButton aria-label="Restore"><Ico s={12}><path d="M1 3H8V10H1ZM3 1H11V8" fill="none" stroke={K} strokeWidth="1.5" /></Ico></WindowButton>
        <WindowButton aria-label="Close" $close="#bcbcbc"><Ico s={12}><P c="#fff" w={1.8} d="M3 3L9 9M9 3L3 9" /></Ico></WindowButton>
      </WindowButtons>
    </RhTitle>
    <RhMenu><button>Flamingo nXt</button><button>ﾍﾙﾌﾟ(H)</button></RhMenu>
    <Commands>
      <History><ScrollCol><Chevron turn={180} /><Chevron /></ScrollCol></History>
      <CommandLine>
        <CommandInput aria-label="Command" />
        <Spin><button aria-label="Up"><Arrow up /></button><button aria-label="Down"><Arrow /></button></Spin>
      </CommandLine>
    </Commands>
    <ToolRows>
      <ToolDock>
        <DockTabs>
          <DockTab $w={36} $first>ｭﾂｰﾙ</DockTab>
          <DockTab $w={86}>ﾚﾝﾀﾞﾘﾝｸﾞﾂｰﾙ</DockTab>
          <DockTab $w={43}>製図</DockTab>
          <DockTab $w={113}>ﾊﾞｰｼﾞｮﾝ5の新機能</DockTab>
          <DockTab $w={103} $last>ｵﾌﾞｼﾞｪｸﾄｽﾅｯﾌﾟ</DockTab>
          <GearSlot aria-label="Toolbar options"><Gear /></GearSlot>
        </DockTabs>
        <DockTools>
          <DockTool $w={13} aria-label="Shade"><Ico><circle cx="9" cy="12" r="9" fill="url(#greyBall)" /></Ico></DockTool>
          <DockTool aria-label="Render"><Ico><ellipse cx="14" cy="19" rx="9" ry="3" fill="#0003" /><circle cx="12" cy="12" r="9" fill="url(#blueBall)" /></Ico></DockTool>
          <DockTool aria-label="Spotlight"><Ico><path d="M8 5L20 1L17 14Z" fill="url(#orange)" stroke="#7a4a10" /></Ico></DockTool>
          <DockTool aria-label="Options"><Ico>
            <ellipse cx="12" cy="12" rx="9" ry="7.500" fill="none" stroke="#4a3a10" strokeWidth="5" strokeDasharray="4.200 2.300" />
            <ellipse cx="12" cy="12" rx="9" ry="7.500" fill="none" stroke="#f0d070" strokeWidth="3" strokeDasharray="3 3.500" strokeDashoffset="-.6" />
            <ellipse cx="12" cy="12" rx="8" ry="6.500" fill="#f0d070" /><path d="M9 4H15V12H9Z" fill="#888" stroke="#333" /></Ico></DockTool>
          <DockTool aria-label="Dimensions"><Ico><P w={1.2} d="M2 2H12M2 12H12M4 4V10M3 4H5M3 10H5M12 12V22M22 12V22M14 20H20M14 19V21M20 19V21" /><path d="M9 1H12V4H9ZM11 11H13V14H11ZM21 11H23V14H21Z" fill="#fff" stroke={K} /></Ico></DockTool>
          <DockTool aria-label="Help"><Ico><circle cx="12" cy="12" r="10" fill="#3f63d2" stroke="#2a459c" /><text x="12" y="18" textAnchor="middle" fontSize="17" fontWeight="bold" fontFamily="Liberation Sans" fill="#fff">?</text></Ico></DockTool>
        </DockTools>
      </ToolDock>
      <SideTools>
        {commandIcons.map(([label, art]) => (
          <SideTool key={label} aria-label={label}><Ico>{art}<P w={1.3} d="M18 2H22V5M1 19V22H4" /></Ico></SideTool>
        ))}
        <TextTool>SelUV</TextTool>
        <TextTool>ShowEdges</TextTool>
      </SideTools>
    </ToolRows>
    <Work>
      <Views>
        <View $grow={449}>
          <svg viewBox="3 1 681 460" preserveAspectRatio="xMinYMin slice" aria-hidden="true">
            <path d={viewLines} stroke="#9299a0" strokeWidth="1" fill="none" />
            <path d="M3.5 99.3L287.8 235L71.3 448" stroke="#85858d" fill="none" strokeWidth="1.2" />
            <path d="M287.8 235L684 423.3" stroke="#a03e3e" strokeWidth="1.6" />
            <path d="M287.8 235L524.5 1" stroke="#479747" strokeWidth="1.8" />
            <path d="M361 220L369 228M369 220L361 228" stroke="#a00000" strokeWidth="3" />
            <path d="M39.5 390V412" stroke="#7d7d85" strokeWidth="1.6" />
            <path d="M39.5 412L55 396M39.5 412L64 423" stroke="#6d6d6d" fill="none" strokeWidth="1.2" />
            <g fontFamily="Liberation Sans" fontSize="14" fill="#616161"><text x="41" y="392">z</text><text x="58" y="397">y</text><text x="67" y="426">x</text></g>
          </svg>
          <ViewLabel $on>Perspective<span><Arrow w={8} /></span></ViewLabel>
        </View>
        <View $grow={146}>
          <svg viewBox="753 632 681 160" preserveAspectRatio="xMinYMin slice" aria-hidden="true">
            {rep(182).map((i) => <path key={i} d={`M${757 + i * 4.667} 632V800`} stroke="#92989f" strokeWidth=".9" />)}
            {rep(34).map((i) => <path key={i} d={`M753 ${634 + i * 4.667}H1600`} stroke="#92989f" strokeWidth=".9" />)}
            {rep(18).map((i) => <path key={i} d={`M${766.5 + i * 46.667} 632V800`} stroke="#81868e" strokeWidth="1.2" />)}
            {rep(3).map((i) => <path key={i} d={`M753 ${657.3 + i * 46.667}H1600`} stroke="#81868e" strokeWidth="1.2" />)}
            <path d="M1093.5 632V704" stroke="#4c984c" strokeWidth="2" />
            <path d="M1094 704H1600" stroke="#a04646" strokeWidth="2" />
            <path d="M1092 700L1100 708M1100 700L1092 708" stroke="#a00000" strokeWidth="3" />
            <path d="M789 710V740H819" stroke="#7b7b83" strokeWidth="1.6" fill="none" />
            <g fontFamily="Liberation Sans" fontSize="14" fill="#616161"><text x="791" y="713">z</text><text x="822" y="742">y</text></g>
          </svg>
          <ViewLabel>Right<span><Arrow w={8} c="#222" /></span></ViewLabel>
        </View>
      </Views>
      <Side>
        <DoubleRule />
        <PanelTabs>
          <PanelTab $w={44} $on><Ico s={16}><path d="M1 2L8 4L15 1V10L7 15L1 10Z" fill="#333d55" /><path d="M1 2L8 5L15 1V6L7 11L1 6Z" fill="#e8441e" /><path d="M7 13L15 8V10L7 15Z" fill="#b8c8e8" /></Ico>ﾚｲ</PanelTab>
          <PanelTab $w={44}><Ico s={15}><path d="M1 1H14V11H1Z" fill="#8b8f96" stroke="#222" strokeWidth="2" /><path d="M4 14H11" stroke="#222" strokeWidth="2" /></Ico>表</PanelTab>
          <PanelTab $w={42}><Ico s={15}><path d="M1 1H14V14H1Z" fill="#dfe6f8" stroke="#44558a" /><path d="M1 1H14V4H1Z" fill="#4458a8" /><circle cx="8" cy="9" r="4.5" fill="#3358d0" /><text x="8" y="12" textAnchor="middle" fontSize="8" fontWeight="bold" fontFamily="Liberation Sans" fill="#fff">?</text></Ico>ﾍﾙ</PanelTab>
          <PanelGear aria-label="Panel options"><Gear /></PanelGear>
        </PanelTabs>
        <Panel $h={273}>
          <LayerTools>
            <button aria-label="New layer"><Ico s={14}><path d="M2 1H9L12 4V13H2Z" fill="#fff" stroke="#222" strokeWidth="1.3" /></Ico></button>
            <button aria-label="Copy layer"><Ico s={14}><path d="M1 1H6L9 4V10H1Z" fill="#fff" stroke="#222" strokeWidth="1.3" /><path d="M5 5H10L13 8V13H5Z" fill="#fff" stroke="#222" strokeWidth="1.3" /></Ico></button>
            <button aria-label="Delete layer"><Ico s={14}><P c="#999" w={2.6} d="M1 1L13 13M13 1L1 13" /></Ico></button>
            <button aria-label="Move up"><Ico s={14}><path d="M0 10H13L7 3Z" fill="#bbb" stroke="#888" /></Ico></button>
            <button aria-label="Move down"><Ico s={14}><path d="M0 4H13L7 11Z" fill="#bbb" stroke="#888" /></Ico></button>
            <button aria-label="Move out"><Ico s={14}><path d="M10 1V13L3 7Z" fill="#bbb" stroke="#888" /></Ico></button>
            <button aria-label="Filter"><Ico s={14}><path d="M3 1H14L10 7Z" fill="#eee" stroke="#222" /></Ico></button>
          </LayerTools>
          <LayerTable>
            <thead><tr><th scope="col">名前</th></tr></thead>
            <tbody><tr><td>A</td></tr></tbody>
          </LayerTable>
          <HScroll><Chevron turn={90} /><i /><Chevron turn={-90} /></HScroll>
        </Panel>
        <DoubleRule />
        <DoubleRule />
        <PanelTabs>
          <PanelTab $w={74} $on><ColorRing />ﾌﾟﾛﾊﾟﾃｨ</PanelTab>
          <PanelGear aria-label="Panel options"><Gear /></PanelGear>
        </PanelTabs>
        <Panel $h={279}>
          <Props>
            <PropTable>
              <colgroup><col /><col /><col /></colgroup>
              <tbody>
                {props.map(([section, rows]) => (
                  <React.Fragment key={section}>
                    <tr><th scope="colgroup" colSpan={3}>{section}</th></tr>
                    {rows.map(([label, value]) => (
                      <tr key={label}><td /><th scope="row">{label}</th><td><PropValue label={label} value={value} /></td></tr>
                    ))}
                  </React.Fragment>
                ))}
              </tbody>
            </PropTable>
            <Spacer />
            <ScrollCol><Chevron turn={180} /><Thumb /><Chevron /></ScrollCol>
          </Props>
        </Panel>
      </Side>
    </Work>
    <RhStatus>
      <StatusCell $w={16} $left>ﾞ</StatusCell>
      <StatusCell $w={73}>平面ﾓｰﾄﾞ</StatusCell>
      <StatusCell $w={54} $on>Osnap</StatusCell>
      <StatusCell $w={74} $on>ｽﾏｰﾄﾄﾗｯｸ</StatusCell>
      <StatusCell $w={72} $on>ｶﾞﾑﾎﾞｰﾙ</StatusCell>
      <StatusCell $w={94}>ﾋｽﾄﾘを記録</StatusCell>
      <StatusCell $w={47}>ﾌｨﾙﾀ</StatusCell>
      <StatusCell $left>CPU使用率: 3.8 %</StatusCell>
      <StatusEnd />
    </RhStatus>
  </Rhino>
);

export default function App() {
  return (
    <Desktop>
      <Global />
      <DefsHost width="0" height="0" aria-hidden="true"><Glyphs /></DefsHost>
      <Grasshopper />
      <RhinoWindow />
    </Desktop>
  );
}
